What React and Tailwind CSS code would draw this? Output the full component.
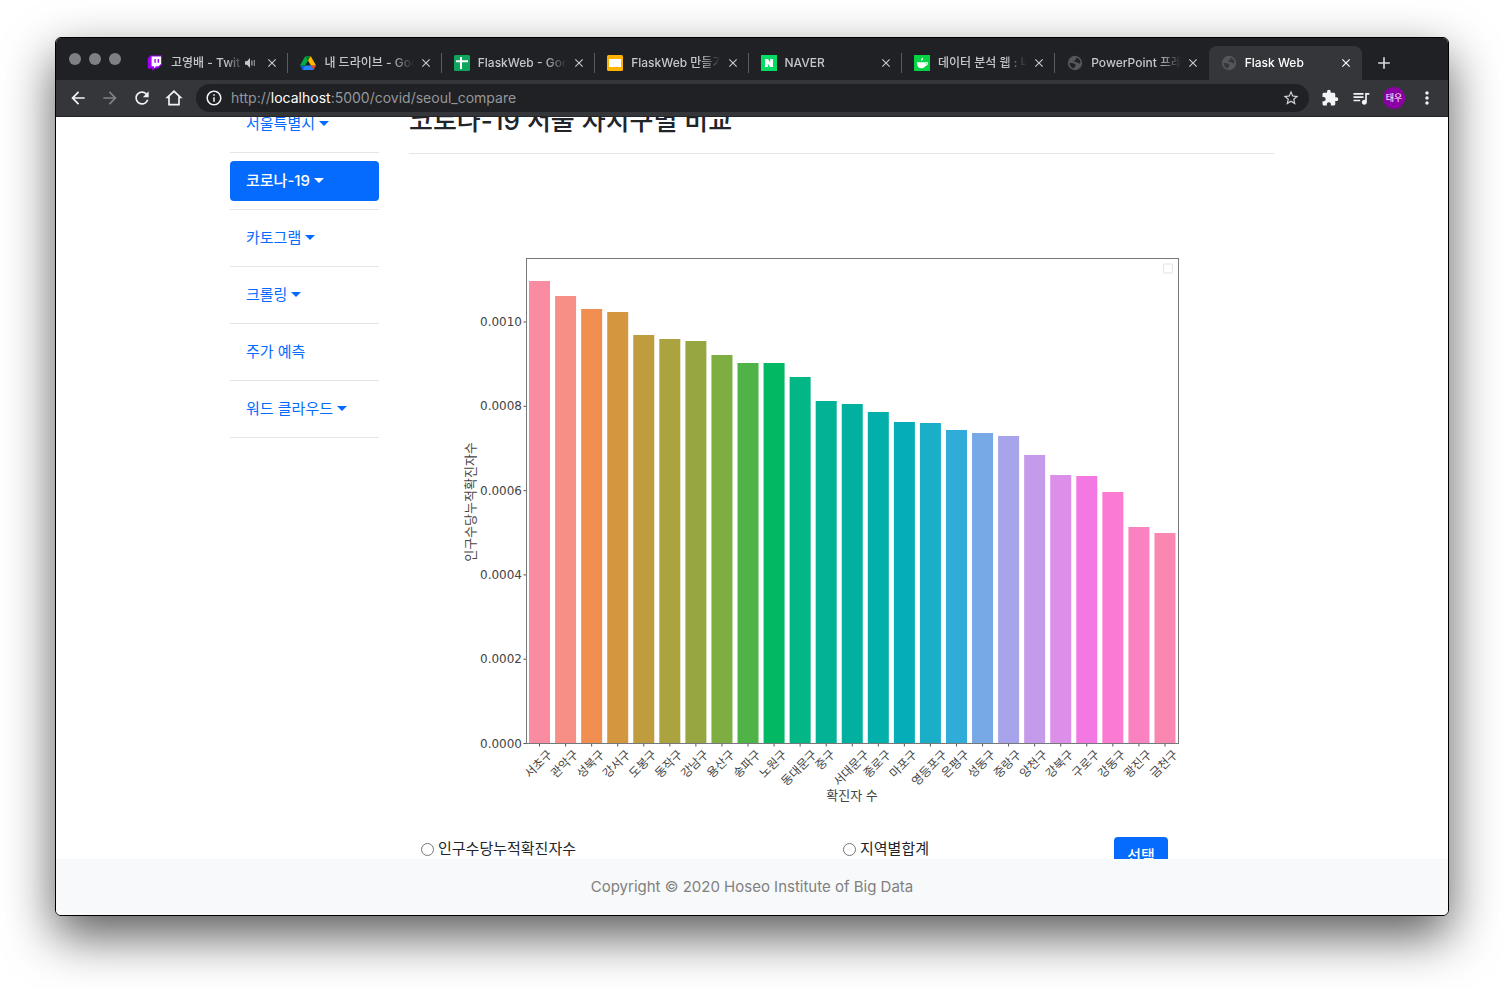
import {
  MdAdd,
  MdArrowBack,
  MdArrowForward,
  MdClose,
  MdExtension,
  MdInfoOutline,
  MdMoreVert,
  MdQueueMusic,
  MdRefresh,
  MdStarBorder,
} from "react-icons/md";

const DriveIcon = () => (
  <svg viewBox="0 0 87.3 78" className="h-[14px] w-4">
    <path d="m6.6 66.85 3.85 6.65c.8 1.4 1.95 2.5 3.3 3.3l13.75-23.8h-27.5c0 1.55.4 3.1 1.2 4.5z" fill="#0066da" />
    <path d="m43.65 25-13.75-23.8c-1.35.8-2.5 1.9-3.3 3.3l-25.4 44a9.06 9.06 0 0 0 -1.2 4.5h27.5z" fill="#00ac47" />
    <path d="m73.55 76.8c1.35-.8 2.5-1.9 3.3-3.3l1.6-2.75 7.65-13.25c.8-1.4 1.2-2.95 1.2-4.5h-27.502l5.852 11.5z" fill="#ea4335" />
    <path d="m43.65 25 13.75-23.8c-1.35-.8-2.9-1.2-4.5-1.2h-18.5c-1.6 0-3.15.45-4.5 1.2z" fill="#00832d" />
    <path d="m59.8 53h-32.3l-13.75 23.8c1.35.8 2.9 1.2 4.5 1.2h50.8c1.6 0 3.15-.45 4.5-1.2z" fill="#2684fc" />
    <path d="m73.4 26.5-12.7-22c-.8-1.4-1.95-2.5-3.3-3.3l-13.75 23.8 16.15 28h27.45c0-1.55-.4-3.1-1.2-4.5z" fill="#ffba00" />
  </svg>
);

const TwitchIcon = () => (
  <svg viewBox="0 0 16 16" className="size-4">
    <path d="M3.4 .6H15V9.6L10.8 13.4H8L5.4 16V13.4H.8V3.2Z" fill="#a100ff" />
    <path d="M4.6 1.6H14V8.8L11.6 11.2H9.2L7 13.2V11.2H4.6Z" fill="#fff" />
    <path d="M7.4 4H8.8V7.8H7.4ZM10.6 4H12V7.8H10.6Z" fill="#a100ff" />
  </svg>
);

const SheetsIcon = () => (
  <svg viewBox="0 0 16 16" className="size-4">
    <rect width="16" height="16" rx="1.5" fill="#0fa55d" />
    <path d="M2 5.3H14V7.3H8V14H6V7.3H2ZM6 2H8V6H6Z" fill="#fff" />
  </svg>
);

const SlidesIcon = () => (
  <svg viewBox="0 0 16 16" className="size-4">
    <rect width="16" height="16" rx="1.5" fill="#ffb300" />
    <rect x="2" y="4" width="12" height="8" fill="#fff" />
  </svg>
);

const NaverIcon = () => (
  <svg viewBox="0 0 16 16" className="size-4">
    <rect width="16" height="16" fill="#05dc64" />
    <path d="M4 4H7L9.2 7.6V4H12V12H9.1L6.8 8.5V12H4Z" fill="#fff" />
  </svg>
);

const CafeIcon = () => (
  <svg viewBox="0 0 16 16" className="size-4">
    <rect width="16" height="16" fill="#03d344" />
    <path d="M2.8 7.2H11.8V9Q11.4 13.2 7.4 13.2Q3 13.2 2.8 7.2Z" fill="#fff" />
    <path d="M11.4 7.8H13.4Q13.6 10.2 11 10.6" fill="none" stroke="#fff" strokeWidth="1.1" />
    <path d="M8.6 2.6Q6.4 3.8 7.2 5.8Q9.6 5.6 8.6 2.6Z" fill="#fff" />
  </svg>
);

const GlobeIcon = ({ active }) => (
  <svg viewBox="0 0 16 16" className="size-4">
    <circle cx="8" cy="8" r="7.2" fill="#54565a" />
    <path
      d="M9.4 2.4Q12.6 3.4 13.6 7.2Q12.4 9.2 11 8Q10.6 6.9 8.8 7.1Q6.6 6.8 7.8 5.2Q9.8 4.4 9.4 2.4ZM2.4 8Q5.4 7.6 7.8 9Q9.6 9.8 8.2 11.3Q6.8 12 7 13.6Q3.4 12.6 2.4 8Z"
      fill={active ? "#35363a" : "#202124"}
    />
  </svg>
);

const HomeIcon = () => (
  <svg viewBox="0 0 24 24" className="size-5" fill="#f1f3f4">
    <path d="M12 5.4l5 4.6V19H7v-9l5-4.6M12 2.4L1.6 12.2H5V21h14v-8.8h3.4L12 2.4z" />
  </svg>
);

const SpeakerIcon = () => (
  <svg viewBox="0 0 12 12" className="size-3 shrink-0" fill="#c4c7cb">
    <path d="M1 4.2H3L6 1V11L3 7.8H1ZM7.4 3.6H8.4V8.4H7.4ZM9.8 3H10.6V9H9.8Z" />
  </svg>
);

const tabs = [
  { title: "고영배 - Twit", Icon: TwitchIcon, audio: true },
  { title: "내 드라이브 - Goo", Icon: DriveIcon },
  { title: "FlaskWeb - Goo", Icon: SheetsIcon },
  { title: "FlaskWeb 만들기", Icon: SlidesIcon },
  { title: "NAVER", Icon: NaverIcon },
  { title: "데이터 분석 웹 : 네", Icon: CafeIcon },
  { title: "PowerPoint 프레", Icon: GlobeIcon },
  { title: "Flask Web", Icon: GlobeIcon, active: true },
];

function Tab({ title, Icon, audio, active, divided }) {
  return (
    <div
      className={
        "flex h-[34px] min-w-0 flex-1 items-center pr-2 pl-3 " +
        (active ? "rounded-t-lg bg-[#35363a] text-white" : "text-[#c4c7cb]")
      }
    >
      <span className="shrink-0">
        <Icon active={active} />
      </span>
      <span className="ml-2 min-w-0 flex-1 whitespace-nowrap text-xs font-medium mask-r-from-75% mask-r-to-100%">
        {title}
      </span>
      {audio && <SpeakerIcon />}
      <button
        aria-label="탭 닫기"
        className={"flex size-4 shrink-0 items-center justify-center " + (audio ? "ml-2" : "ml-1")}
      >
        <MdClose className="size-[14px]" />
      </button>
      <span className={"-mr-2 ml-[7px] h-5 w-px " + (divided ? "bg-[#5a5c60]" : "")} />
    </div>
  );
}

function BrowserBar() {
  return (
    <header className="shrink-0 bg-[#202124]">
      <div className="flex h-[42px] items-end">
        <div className="flex h-full w-[79px] shrink-0 items-center gap-2 pl-[13px]">
          <span className="size-3 rounded-full bg-[#7f8083]" />
          <span className="size-3 rounded-full bg-[#7f8083]" />
          <span className="size-3 rounded-full bg-[#7f8083]" />
        </div>
        <div className="flex min-w-0 flex-1">
          {tabs.map((t, i) => (
            <Tab key={t.title} {...t} divided={i < 6} />
          ))}
        </div>
        <div className="flex h-[34px] w-[86px] shrink-0 items-center pl-3">
          <button aria-label="새 탭" className="text-[#d5d7da]">
            <MdAdd className="size-5" />
          </button>
        </div>
      </div>
      <div className="flex h-[37px] items-center border-b border-[#232428] bg-[#35363a] pr-[11px] pl-3 text-[#f1f3f4]">
        <div className="flex items-center gap-3">
          <button aria-label="뒤로">
            <MdArrowBack className="size-5" />
          </button>
          <button aria-label="앞으로" className="text-[#808184]">
            <MdArrowForward className="size-5" />
          </button>
          <button aria-label="새로고침">
            <MdRefresh className="size-5" />
          </button>
          <button aria-label="홈">
            <HomeIcon />
          </button>
        </div>
        <div className="ml-3 flex h-7 flex-1 items-center rounded-full bg-[#202124] pr-[9px] pl-[9px]">
          <MdInfoOutline className="size-[18px]" />
          <a href="#url" className="ml-2 flex-1 text-sm text-[#95979b]">
            http://<span className="text-white">localhost</span>:5000/covid/seoul_compare
          </a>
          <button aria-label="북마크" className="text-[#d0d2d5]">
            <MdStarBorder className="size-[18px]" />
          </button>
        </div>
        <div className="ml-3 flex items-center gap-3">
          <button aria-label="확장 프로그램">
            <MdExtension className="size-[18px]" />
          </button>
          <button aria-label="미디어">
            <MdQueueMusic className="size-5" />
          </button>
          <button className="size-[22px] rounded-full bg-[#8b00a5] text-[9px] text-white">태우</button>
          <button aria-label="메뉴">
            <MdMoreVert className="size-5" />
          </button>
        </div>
      </div>
    </header>
  );
}

const menu = [
  { label: "서울특별시", caret: true },
  { label: "코로나-19", caret: true, active: true },
  { label: "카토그램", caret: true },
  { label: "크롤링", caret: true },
  { label: "주가 예측" },
  { label: "워드 클라우드", caret: true },
];

function Sidebar() {
  return (
    <nav className="w-[149px] shrink-0">
      {menu.map((m) => (
        <div key={m.label} className="mb-2 border-b border-[#e5e5e6] pb-2">
          <a
            href="#menu"
            className={
              "flex h-10 items-center gap-1 rounded px-4 text-[15px] " +
              (m.active ? "bg-[#056bff] font-medium text-white" : "text-[#056bff]")
            }
          >
            {m.label}
            {m.caret && (
              <span className="mb-0.5 border-x-5 border-t-5 border-x-transparent border-t-current" />
            )}
          </a>
        </div>
      ))}
    </nav>
  );
}

const bars = [
  ["서초구", 281, "#fa8ca1"],
  ["관악구", 296, "#f78f86"],
  ["성북구", 309, "#f08f50"],
  ["강서구", 312, "#d4973f"],
  ["도봉구", 335, "#bf9d3f"],
  ["동작구", 339, "#aaa33f"],
  ["강남구", 341, "#97a640"],
  ["용산구", 355, "#7ead42"],
  ["송파구", 363, "#4fb348"],
  ["노원구", 363, "#03b862"],
  ["동대문구", 377, "#02b686"],
  ["중구", 401, "#02b295"],
  ["서대문구", 404, "#02b0a0"],
  ["종로구", 412, "#02afab"],
  ["마포구", 422, "#04aeb8"],
  ["영등포구", 423, "#1aaec8"],
  ["은평구", 430, "#30acd9"],
  ["성동구", 433, "#77a9e6"],
  ["중랑구", 436, "#a8a4eb"],
  ["양천구", 455, "#c49bea"],
  ["강북구", 475, "#dc8fe9"],
  ["구로구", 476, "#f478e4"],
  ["강동구", 492, "#fa7bd1"],
  ["광진구", 527, "#fa82c0"],
  ["금천구", 533, "#fa87b1"],
];
const ticks = ["0.0010", "0.0008", "0.0006", "0.0004", "0.0002", "0.0000"];

const LEFT = 526.5;
const BASE = 743.5;
const STEP = 26.06;

function Chart() {
  return (
    <svg viewBox="409 171 865 650" className="mt-[17px] w-full" role="img" aria-label="인구수당누적확진자수">
      {bars.map(([name, top, color], i) => {
        const cx = LEFT + STEP * (i + 0.5);
        const labelY = 764 + (name.length - 3) * 4;
        return (
          <g key={name}>
            <rect x={cx - 10.5} y={top} width="21" height={BASE - top} fill={color} />
            <path d={`M${cx} ${BASE}v3`} stroke="#555" />
            <text
              transform={`translate(${cx - 1} ${labelY}) rotate(-45)`}
              textAnchor="middle"
              dy="4"
              className="fill-[#444] text-[12px]"
            >
              {name}
            </text>
          </g>
        );
      })}
      {ticks.map((t, i) => (
        <g key={t}>
          <path d={`M${LEFT - 3} ${322 + i * 84.3}h3`} stroke="#555" />
          <text x="522" y={326 + i * 84.3} textAnchor="end" className="fill-[#444] font-['DejaVu_Sans'] text-[12px]">
            {t}
          </text>
        </g>
      ))}
      <rect x={LEFT} y="258.5" width="652" height="485" fill="none" stroke="#77787a" />
      <rect x="1163.5" y="264" width="9" height="9" rx="1" fill="none" stroke="#e2e2e2" />
      <text transform="translate(475 502) rotate(-90)" textAnchor="middle" className="fill-[#444] text-[13px]">
        인구수당누적확진자수
      </text>
      <text x="852" y="800" textAnchor="middle" className="fill-[#444] text-[13px]">
        확진자 수
      </text>
    </svg>
  );
}

export default function App() {
  return (
    <div className="h-screen bg-white px-[55px] pt-[37px] pb-[73px] font-[Inter,'Noto_Sans_CJK_KR',sans-serif]">
      <div className="flex h-full flex-col overflow-hidden rounded-md border border-black bg-white shadow-[0_20px_50px_rgba(0,0,0,0.65)]">
        <BrowserBar />
        <main className="min-h-0 flex-1 overflow-hidden">
          <div className="mx-auto -mt-[13px] flex max-w-[1044px] gap-[30px] text-[15px] text-[#212529]">
            <Sidebar />
            <section className="min-w-0 flex-1">
              <h1 className="border-b border-[#e5e5e6] pb-[15px] text-[26px] leading-[34px] font-medium">
                코로나-19 서울 자치구별 비교
              </h1>
              <Chart />
              <form className="mt-4 grid grid-cols-[422fr_271fr_160fr] items-start pl-3">
                <label className="flex h-6 items-center gap-1">
                  <input type="radio" name="kind" className="size-[13px]" />
                  인구수당누적확진자수
                </label>
                <label className="flex h-6 items-center gap-1">
                  <input type="radio" name="kind" className="size-[13px]" />
                  지역별합계
                </label>
                <button type="button" className="h-[38px] w-[54px] rounded bg-[#056bff] font-medium text-white">
                  선택
                </button>
              </form>
            </section>
          </div>
        </main>
        <footer className="flex h-14 shrink-0 items-center justify-center bg-[#f8f9fa] text-[15px] text-[#7f8080]">
          Copyright © 2020 Hoseo Institute of Big Data
        </footer>
      </div>
    </div>
  );
}
